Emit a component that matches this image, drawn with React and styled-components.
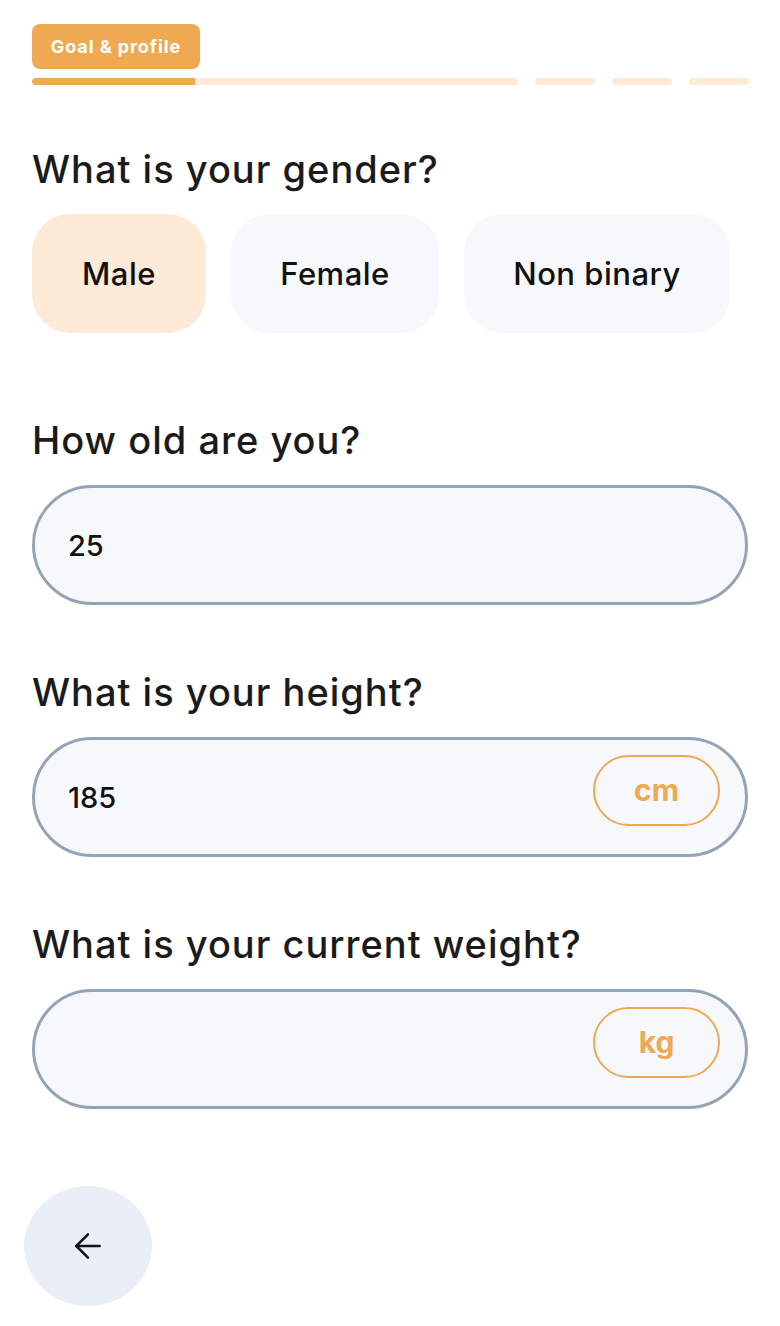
import React, { useState } from 'react';
import styled, { createGlobalStyle } from 'styled-components';

const GlobalStyle = createGlobalStyle`
  html, body { margin: 0; padding: 0; background: #ffffff; }
  body { font-family: Inter, "Noto Sans", sans-serif; color: #1b1b1b; }
  * { box-sizing: border-box; }
`;

const Page = styled.div`
  width: 780px;
  min-height: 1326px;
  padding: 24px 32px 20px 32px;
  display: flex;
  flex-direction: column;
`;

const Badge = styled.div`
  align-self: flex-start;
  height: 45px;
  width: 168px;
  display: flex;
  align-items: center;
  justify-content: center;
  border-radius: 8px;
  background: #eea952;
  color: #ffffff;
  font-size: 18px;
  font-weight: 700;
  letter-spacing: 0.9px;
`;

const Progress = styled.div`
  margin-top: 9px;
  display: flex;
  gap: 17px;
`;

const Segment = styled.div`
  height: 7px;
  border-radius: 4px;
  background: #fdebd8;
  flex: ${p => (p.$wide ? '0 0 486px' : '0 0 60px')};
  overflow: hidden;
`;

const Fill = styled.div`
  height: 100%;
  background: #eea952;
  border-radius: 4px 0 0 4px;
`;

const Question = styled.section`
  margin-top: ${p => p.$top}px;
  display: flex;
  flex-direction: column;
  gap: 22px;
`;

const Heading = styled.h2`
  margin: 0;
  font-size: 38px;
  line-height: 46px;
  font-weight: 500;
  letter-spacing: 1px;
  color: #1b1b1b;
`;

const Options = styled.div`
  display: flex;
  gap: 25px;
`;

const Option = styled.button`
  height: 119px;
  width: ${p => p.$w}px;
  border: none;
  border-radius: 38px;
  background: ${p => (p.$active ? '#fdebd8' : '#f6f8fb')};
  font-family: inherit;
  font-size: 31px;
  font-weight: 500;
  letter-spacing: 0.5px;
  color: #111111;
  cursor: pointer;
`;

const Field = styled.div`
  height: 120px;
  border: 3px solid #94a4b7;
  border-radius: 60px;
  background: #f6f8fb;
  display: flex;
  align-items: center;
  padding: 0 25px 0 33px;
`;

const Input = styled.input`
  flex: 1;
  min-width: 0;
  border: none;
  background: transparent;
  outline: none;
  font-family: inherit;
  font-size: 29px;
  font-weight: 500;
  color: #111111;
  padding: 0;
`;

const Unit = styled.span`
  width: 127px;
  height: 71px;
  border: 2px solid #eea952;
  border-radius: 36px;
  display: flex;
  align-items: center;
  justify-content: center;
  color: #eea952;
  font-size: 30px;
  font-weight: 700;
  margin-bottom: 14px;
`;

const Back = styled.button`
  margin-top: 77px;
  margin-left: -8px;
  width: 128px;
  height: 120px;
  border: none;
  border-radius: 50%;
  background: #e9eef7;
  display: flex;
  align-items: center;
  justify-content: center;
  cursor: pointer;
`;

const genders = [
  { label: 'Male', w: 174 },
  { label: 'Female', w: 208 },
  { label: 'Non binary', w: 266 },
];

export default function App() {
  const [gender, setGender] = useState('Male');
  const [age, setAge] = useState('25');
  const [height, setHeight] = useState('185');
  const [weight, setWeight] = useState('');

  return (
    <Page>
      <GlobalStyle />
      <Badge>Goal &amp; profile</Badge>
      <Progress>
        <Segment $wide>
          <Fill style={{ width: '33.5%' }} />
        </Segment>
        <Segment />
        <Segment />
        <Segment />
      </Progress>

      <Question $top={61}>
        <Heading>What is your gender?</Heading>
        <Options>
          {genders.map(g => (
            <Option
              key={g.label}
              $w={g.w}
              $active={gender === g.label}
              onClick={() => setGender(g.label)}
            >
              {g.label}
            </Option>
          ))}
        </Options>
      </Question>

      <Question $top={84}>
        <Heading>How old are you?</Heading>
        <Field>
          <Input value={age} onChange={e => setAge(e.target.value)} />
        </Field>
      </Question>

      <Question $top={64}>
        <Heading>What is your height?</Heading>
        <Field>
          <Input value={height} onChange={e => setHeight(e.target.value)} />
          <Unit>cm</Unit>
        </Field>
      </Question>

      <Question $top={64}>
        <Heading>What is your current weight?</Heading>
        <Field>
          <Input value={weight} onChange={e => setWeight(e.target.value)} />
          <Unit>kg</Unit>
        </Field>
      </Question>

      <Back aria-label="Back">
        <svg width="40" height="40" viewBox="0 0 24 24" fill="none" stroke="#111" strokeWidth="1.5" strokeLinecap="round" strokeLinejoin="round">
          <path d="M19 12H5" />
          <path d="M12 19l-7-7 7-7" />
        </svg>
      </Back>
    </Page>
  );
}
